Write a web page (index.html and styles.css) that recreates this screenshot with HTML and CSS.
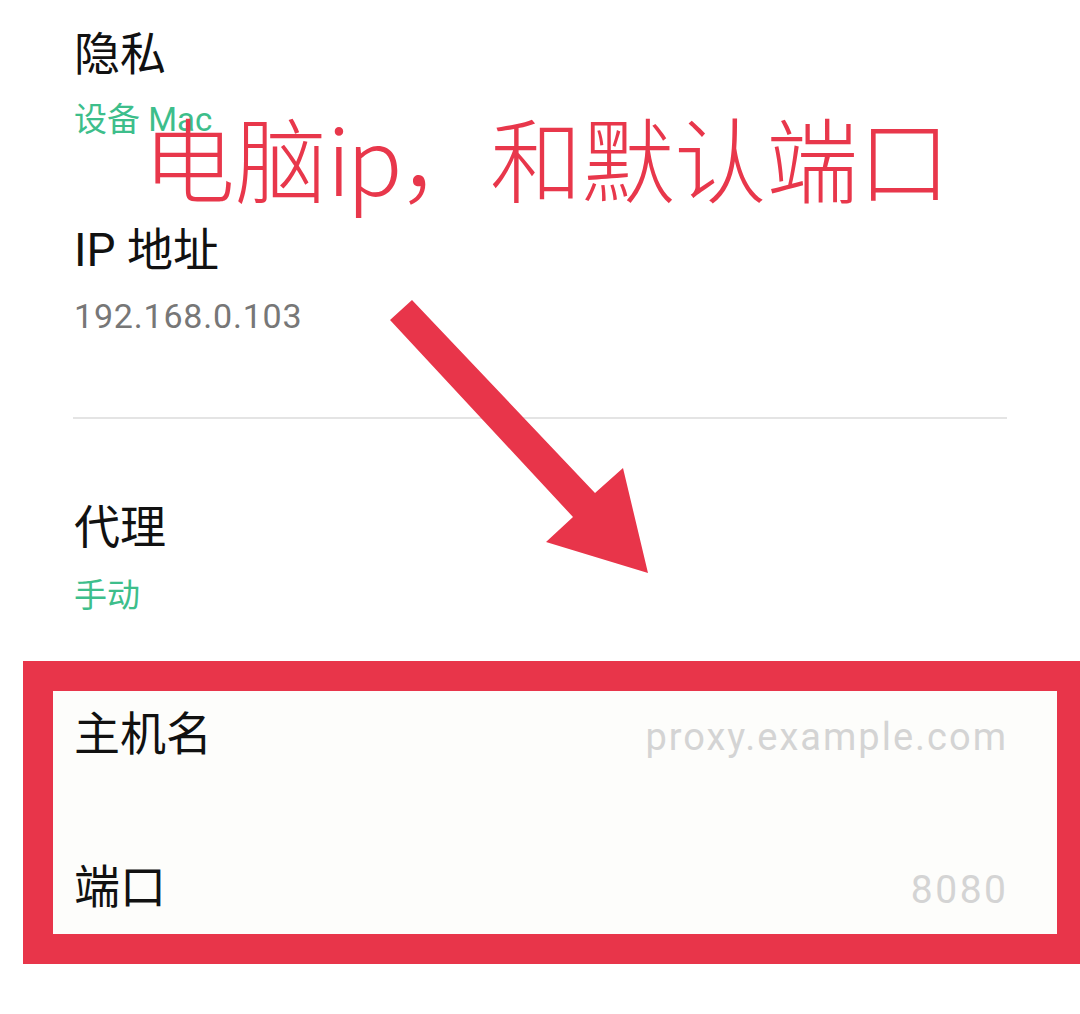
FILE: index.html
```html
<!DOCTYPE html>
<html lang="zh-CN">
<head>
<meta charset="utf-8">
<title>WLAN 详情</title>
<link rel="stylesheet" href="styles.css">
</head>
<body>
<div class="page">
  <section class="list">
    <div class="title t-privacy">隐私</div>
    <div class="sub s-privacy">设备 Mac</div>
    <div class="title t-ip">IP 地址</div>
    <div class="value v-ip">192.168.0.103</div>
  </section>
  <div class="divider"></div>
  <section class="list">
    <div class="title t-proxy">代理</div>
    <div class="sub s-proxy">手动</div>
  </section>
  <section class="highlight">
    <div class="field f-host">
      <span class="title">主机名</span>
      <span class="placeholder p-host">proxy.example.com</span>
    </div>
    <div class="field f-port">
      <span class="title">端口</span>
      <span class="placeholder p-port">8080</span>
    </div>
  </section>

  <div class="note">电脑<span class="note-latin">ip</span>，和默认端口</div>
  <svg class="arrow" width="270" height="285" viewBox="0 0 270 285" aria-hidden="true">
    <polygon points="27,5 210,198 238,173 263,278 161,247 188,222 5,25" fill="#e8354a"/>
  </svg>
</div>
</body>
</html>
```
FILE: styles.css
```css
html, body {
  margin: 0;
  padding: 0;
  background: #ffffff;
}
body {
  width: 1080px;
  height: 1014px;
  overflow: hidden;
}
.page {
  position: relative;
  width: 1080px;
  height: 1014px;
  padding-top: 31px;
  box-sizing: border-box;
}
.list {
  display: flex;
  flex-direction: column;
  align-items: flex-start;
  padding: 0 73px 0 74px;
}
.title {
  font-family: Roboto, "Noto Sans CJK SC", sans-serif;
  font-size: 46px;
  line-height: 46px;
  color: #111111;
}
.sub {
  font-family: Roboto, "Noto Sans CJK SC", sans-serif;
  font-size: 33px;
  line-height: 33px;
  color: #3dbe8b;
}
.value {
  font-family: Roboto, sans-serif;
  font-size: 34px;
  line-height: 34px;
  letter-spacing: 0.8px;
  color: #777777;
}
.s-privacy { margin-top: 26px; }
.t-ip { margin-top: 91px; }
.v-ip { margin-top: 26px; }
.divider {
  height: 2px;
  background: #e4e4e4;
  margin: 84px 73px 0 73px;
}
.t-proxy { margin-top: 85px; }
.s-proxy { margin-top: 29px; }

.highlight {
  margin: 49px -7px 0 23px;
  border: 30px solid #e8354a;
  background: #fdfdfb;
  padding: 20px 51px 21px 21px;
  display: flex;
  flex-direction: column;
  gap: 104px;
}
.field {
  display: flex;
  justify-content: space-between;
  align-items: baseline;
}
.placeholder {
  font-family: Roboto, sans-serif;
  color: #d4d4d4;
  letter-spacing: 2px;
  margin-right: -2px;
}
.p-host { font-size: 38px; line-height: 46px; }
.p-port { font-size: 39px; line-height: 46px; letter-spacing: 2.5px; margin-right: -2.5px; }

.note {
  position: absolute;
  left: 143px;
  top: 110px;
  font-family: "Noto Sans CJK SC", sans-serif;
  font-weight: 300;
  font-size: 92px;
  line-height: 92px;
  color: #e8374b;
  white-space: nowrap;
}
.note-latin {
  letter-spacing: -4px;
}
.arrow {
  position: absolute;
  left: 385px;
  top: 295px;
}
```
